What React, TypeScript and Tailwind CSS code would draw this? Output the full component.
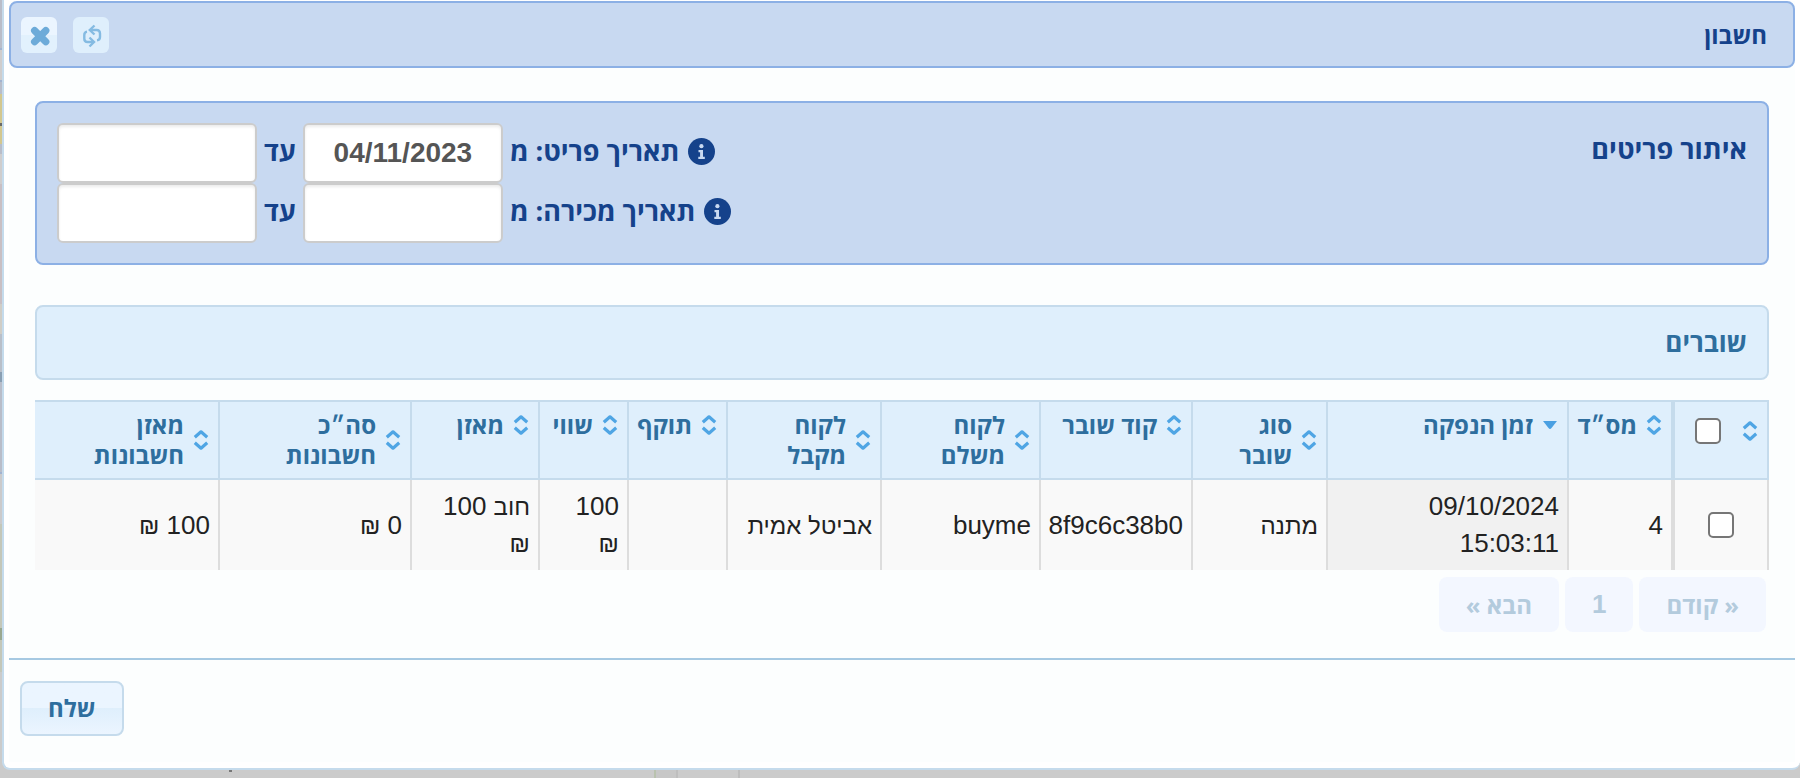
import type { ReactNode } from 'react';

type Column = { id: string; lines: string[]; width: string; sorted?: boolean; cell: ReactNode[] };

function Word({ children }: { children: ReactNode }) {
  return <span className="text-2xl leading-[30px]">{children}</span>;
}

const columns: Column[] = [
  { id: 'serial', lines: ['מס״ד'], width: 'w-[104px]', cell: ['4'] },
  { id: 'issued', lines: ['זמן הנפקה'], width: 'w-[241px]', sorted: true, cell: ['09/10/2024', '15:03:11'] },
  { id: 'type', lines: ['סוג', 'שובר'], width: 'w-[135px]', cell: [<Word>מתנה</Word>] },
  { id: 'code', lines: ['קוד שובר'], width: 'w-[152px]', cell: ['8f9c6c38b0'] },
  { id: 'payer', lines: ['לקוח', 'משלם'], width: 'w-[159px]', cell: ['buyme'] },
  { id: 'receiver', lines: ['לקוח', 'מקבל'], width: 'w-[154px]', cell: [<Word>אביטל אמית</Word>] },
  { id: 'expiry', lines: ['תוקף'], width: 'w-[99px]', cell: [] },
  { id: 'value', lines: ['שווי'], width: 'w-[89px]', cell: ['100', <Word>₪</Word>] },
  { id: 'balance', lines: ['מאזן'], width: 'w-[128px]', cell: [<><Word>חוב</Word> 100</>, <Word>₪</Word>] },
  { id: 'invoices', lines: ['סה״כ', 'חשבונות'], width: 'w-[192px]', cell: [<>0 <Word>₪</Word></>] },
  { id: 'invoiceBalance', lines: ['מאזן', 'חשבונות'], width: 'w-[185px]', cell: [<>100 <Word>₪</Word></>] },
];

// Slices of the page that stay visible beside the dialog.
const edge = [
  { size: 'h-12', color: 'bg-[#b9bdc9]' },
  { size: 'h-0.5', color: 'bg-[#a3b3cf]' },
  { size: 'h-[30px]', color: 'bg-[#cfcdcd]' },
  { size: 'h-0.5', color: 'bg-[#a3b3cf]' },
  { size: 'h-3', color: 'bg-[#b9bdc9]' },
  { size: 'h-[29px]', color: 'bg-[#d3c78f]' },
  { size: 'h-[3px]', color: 'bg-[#6b6a66]' },
  { size: 'h-[18px]', color: 'bg-[#d3c78f]' },
  { size: 'h-2.5', color: 'bg-[#b9bdc9]' },
  { size: 'h-[30px]', color: 'bg-[#cfcdcd]' },
  { size: 'h-[120px]', color: 'bg-[#c9bfc3]' },
  { size: 'h-[30px]', color: 'bg-[#d0cdc6]' },
  { size: 'h-[38px]', color: 'bg-[#b9bfc9]' },
  { size: 'h-2.5', color: 'bg-[#8a9fb3]' },
  { size: 'h-[90px]', color: 'bg-[#b9bdc9]' },
  { size: 'h-0.5', color: 'bg-[#a3b3cf]' },
  { size: 'h-[50px]', color: 'bg-[#cbcacb]' },
  { size: 'h-[104px]', color: 'bg-[#c4c7b9]' },
  { size: 'h-3', color: 'bg-[#9aa890]' },
  { size: 'h-[32px]', color: 'bg-[#c4c7b9]' },
];

function SortIcon({ sorted = false }: { sorted?: boolean }) {
  if (sorted) {
    return (
      <svg aria-hidden="true" viewBox="0 0 16 20" className="h-5 w-4 shrink-0">
        <path d="M1 6 H15 L9.5 13 Q8 14.8 6.5 13 Z" fill="#4aa0e2" />
      </svg>
    );
  }
  return (
    <svg
      aria-hidden="true"
      viewBox="0 0 16 20"
      className="h-5 w-4 shrink-0"
      fill="none"
      stroke="#4fa5e4"
      strokeWidth="3.2"
      strokeLinejoin="round"
    >
      <path d="M1.8 7.2 L8 1.8 L14.2 7.2" />
      <path d="M1.8 12.8 L8 18.2 L14.2 12.8" />
    </svg>
  );
}

function InfoIcon() {
  return (
    <svg aria-hidden="true" viewBox="0 0 27 27" className="size-[27px] shrink-0">
      <circle cx="13.5" cy="13.5" r="13.5" fill="#15428b" />
      <circle cx="13.4" cy="8.2" r="2.1" fill="#c8d9f1" />
      <path d="M10.5 12 H15 V18.7 H16.8 V21 H10.3 V18.7 H12.1 V14.3 H10.5 Z" fill="#c8d9f1" />
    </svg>
  );
}

function Check({ label }: { label: string }) {
  return (
    <input
      type="checkbox"
      aria-label={label}
      className="block size-[26px] shrink-0 appearance-none rounded-[5px] border-2 border-[#767676] bg-white checked:bg-[#2e6e9e]"
    />
  );
}

function DateField({ label, value = '' }: { label: string; value?: string }) {
  return (
    <input
      type="text"
      dir="ltr"
      aria-label={label}
      defaultValue={value}
      className="h-[60px] w-[200px] rounded-[6px] border-2 border-[#cccccc] bg-white text-center text-[28px] font-bold text-[#555555] shadow-[inset_0_2px_3px_rgba(0,0,0,0.08)] [font-family:'Liberation_Sans',Arial,sans-serif]"
    />
  );
}

function DateRange({ label, from }: { label: string; from?: string }) {
  return (
    <div className="flex items-center justify-end gap-[7px]">
      <div className="flex items-center gap-2 pb-1">
        <InfoIcon />
        <span>{label}: מ</span>
      </div>
      <DateField label={`${label} מ`} value={from} />
      <span className="pb-1">עד</span>
      <DateField label={`${label} עד`} />
    </div>
  );
}

function PagerButton({ children }: { children: ReactNode }) {
  return (
    <button
      type="button"
      disabled
      className="h-[55px] rounded-lg bg-[#f3f7ff] px-[27px] text-2xl font-bold text-[#b3cbdd] [font-family:'Open_Sans',Arial,sans-serif]"
    >
      {children}
    </button>
  );
}

export default function App() {
  return (
    <div
      dir="rtl"
      className="flex min-h-screen flex-col bg-[#cbcbcb] text-[26px] leading-[30px] text-[#222222] [font-family:'Liberation_Sans',Arial,sans-serif]"
    >
      <div className="flex">
        <section
          aria-labelledby="dialog-title"
          className="min-w-0 flex-1 rounded-b-lg border-b-2 border-l-2 border-[#c5dbec] bg-white px-[5px] pt-px pb-[6px]"
        >
          <div className="bg-[#fcfefe]">
            <header className="flex items-center justify-between rounded-lg border-2 border-[#8cb0e5] bg-[#c8d9f1] pt-[14px] pr-[26px] pb-[13px] pl-[10px]">
              <h1
                id="dialog-title"
                className="text-2xl font-bold text-[#15428b] [font-family:'Open_Sans',Arial,sans-serif]"
              >
                חשבון
              </h1>
              <div className="flex gap-4">
                <button type="button" aria-label="רענון" className="size-9 rounded-[6px] bg-[#dfeffc]">
                  <svg aria-hidden="true" viewBox="0 0 36 36" className="size-9" fill="none" stroke="#85bbe2" strokeWidth="2.4">
                    <path d="M21.5 8.5 L16.8 13 L21.5 17.5" />
                    <path d="M17.5 13 H23.5 Q27 13 27 16.5 V20 Q27 23 24 23.4" />
                    <path d="M16.5 20.5 L21 25 L16.5 29.5" />
                    <path d="M20.5 25 H14.5 Q11.3 25 11.3 21.8 V18 Q11.3 15 14 14.6" />
                  </svg>
                </button>
                <button
                  type="button"
                  aria-label="סגירה"
                  className="size-9 rounded-[6px] bg-linear-to-b from-[#ebf5ff] from-50% to-[#e2f1fd] to-50%"
                >
                  <svg
                    aria-hidden="true"
                    viewBox="0 0 36 36"
                    className="size-9"
                    stroke="#6dabd9"
                    strokeWidth="7.2"
                    strokeLinecap="round"
                  >
                    <path d="M13.6 13.6 L24.8 24.8 M24.8 13.6 L13.6 24.8" />
                  </svg>
                </button>
              </div>
            </header>

            <main className="px-[26px] pt-[33px] pb-[26px]">
              <section className="flex items-start justify-between rounded-lg border-2 border-[#8cb0e5] bg-[#c8d9f1] p-5 text-[27px] font-bold text-[#15428b] [font-family:'Open_Sans',Arial,sans-serif]">
                <h2 className="leading-[52px]">איתור פריטים</h2>
                <div>
                  <DateRange label="תאריך פריט" from="04/11/2023" />
                  <DateRange label="תאריך מכירה" />
                </div>
              </section>

              <section className="pt-10">
                <h2 className="rounded-lg border-2 border-[#c5dbec] bg-[#dfeffc] px-5 py-[20px] leading-[31px] font-bold text-[#2e6e9e] [font-family:'Open_Sans',Arial,sans-serif]">
                  שוברים
                </h2>
                <table className="mt-5 w-full table-fixed border-separate border-spacing-0">
                  <thead>
                    <tr className="bg-[#dfeffc] text-2xl leading-[30px] text-[#2e6e9e] [font-family:'Open_Sans',Arial,sans-serif]">
                      <th className="w-[96px] border-2 border-[#c5dbec] pt-4 pr-[9px] align-top">
                        <div className="flex items-center gap-[21px]">
                          <SortIcon />
                          <Check label="בחירת כל השוברים" />
                        </div>
                      </th>
                      {columns.map((column) => (
                        <th
                          key={column.id}
                          className={`${column.width} border-y-2 border-r-2 border-[#c5dbec] py-2 pr-[9px] text-right align-top font-bold whitespace-nowrap`}
                        >
                          <div className="flex items-center gap-[9px]">
                            <SortIcon sorted={column.sorted} />
                            <span className="leading-[30px]">
                              {column.lines.map((line) => (
                                <span key={line} className="block">
                                  {line}
                                </span>
                              ))}
                            </span>
                          </div>
                        </th>
                      ))}
                    </tr>
                  </thead>
                  <tbody>
                    <tr className="bg-[#f9f9f9] leading-[37px]">
                      <td className="border-x-2 border-[#dddddd]">
                        <div className="flex justify-center">
                          <Check label="בחירת שובר 4" />
                        </div>
                      </td>
                      {columns.map((column) => (
                        <td
                          key={column.id}
                          className={`border-r-2 border-[#dddddd] py-2 pr-2 whitespace-nowrap ${column.sorted ? 'bg-[#f1f1f1]' : ''}`}
                        >
                          {column.cell.map((line, index) => (
                            <span key={index} className="block">
                              {line}
                            </span>
                          ))}
                        </td>
                      ))}
                    </tr>
                  </tbody>
                </table>
                <nav aria-label="עמודים" className="flex gap-[6px] pt-[7px] pr-[3px]">
                  <PagerButton>« קודם</PagerButton>
                  <PagerButton>
                    <span className="text-[26px] [font-family:'Liberation_Sans',Arial,sans-serif]">1</span>
                  </PagerButton>
                  <PagerButton>הבא »</PagerButton>
                </nav>
              </section>
            </main>

            <footer className="flex justify-end border-t-2 border-[#a6c9e2] pt-[21px] pb-[26px] pl-[11px]">
              <button
                type="button"
                className="h-[55px] rounded-lg border-2 border-[#c5dbec] bg-linear-to-b from-[#ebf5ff] from-50% via-[#dfeffc] via-50% to-[#ebf5ff] px-[26px] pb-0.5 text-2xl font-bold text-[#2e6e9e] [font-family:'Open_Sans',Arial,sans-serif]"
              >
                שלח
              </button>
            </footer>
          </div>
        </section>
        <div aria-hidden="true" className="w-0.5">
          {edge.map((slice, index) => (
            <div key={index} className={`${slice.size} ${slice.color}`} />
          ))}
        </div>
      </div>

      <div aria-hidden="true" className="flex flex-1 items-stretch justify-end">
        <div className="w-0.5 bg-[#bdbdbd]" />
        <div className="w-[60px]" />
        <div className="w-0.5 bg-[#bebebe]" />
        <div className="w-5 bg-[#c7c7c7]" />
        <div className="w-0.5 bg-[#b9c2ae]" />
        <div className="w-[422px]" />
        <div className="h-0.5 w-[3px] bg-[#777777]" />
        <div className="w-[229px]" />
      </div>
    </div>
  );
}
